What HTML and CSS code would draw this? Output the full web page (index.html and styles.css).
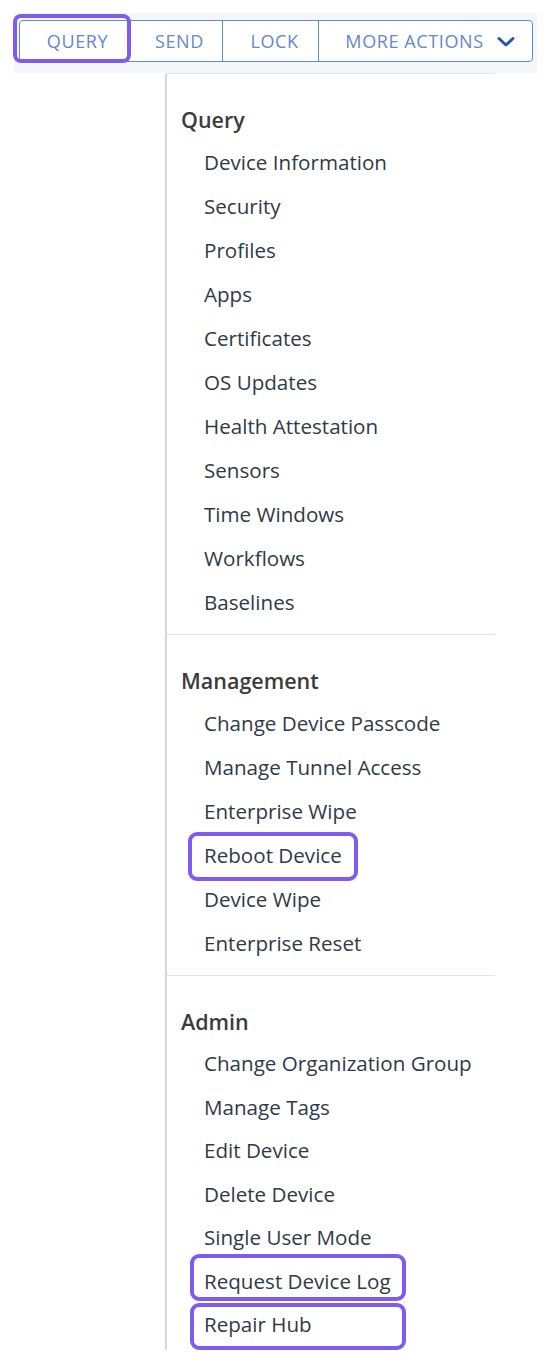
FILE: index.html
```html
<!DOCTYPE html>
<html lang="en">
<head>
<meta charset="utf-8">
<title>Device actions</title>
<link rel="stylesheet" href="styles.css">
</head>
<body>
<div class="page">
  <div class="toolbar">
    <div class="btn-group">
      <button class="btn btn-query is-marked">QUERY</button>
      <button class="btn btn-send">SEND</button>
      <button class="btn btn-lock">LOCK</button>
      <button class="btn btn-more">MORE ACTIONS
        <svg class="chev" width="18" height="12" viewBox="0 0 18 12" aria-hidden="true"><path d="M2 2.5 L9 9 L16 2.5" fill="none" stroke="#1f5aa6" stroke-width="3" stroke-linecap="round" stroke-linejoin="round"/></svg>
      </button>
    </div>
  </div>
  <div class="menu">
    <section class="group group-first">
      <h3 class="group-title">Query</h3>
      <ul class="items">
        <li>Device Information</li>
        <li>Security</li>
        <li>Profiles</li>
        <li>Apps</li>
        <li>Certificates</li>
        <li>OS Updates</li>
        <li>Health Attestation</li>
        <li>Sensors</li>
        <li>Time Windows</li>
        <li>Workflows</li>
        <li>Baselines</li>
      </ul>
    </section>
    <section class="group">
      <h3 class="group-title">Management</h3>
      <ul class="items">
        <li>Change Device Passcode</li>
        <li>Manage Tunnel Access</li>
        <li>Enterprise Wipe</li>
        <li class="mark mark-reboot">Reboot Device</li>
        <li>Device Wipe</li>
        <li>Enterprise Reset</li>
      </ul>
    </section>
    <section class="group group-last">
      <h3 class="group-title">Admin</h3>
      <ul class="items items-tight">
        <li>Change Organization Group</li>
        <li>Manage Tags</li>
        <li>Edit Device</li>
        <li>Delete Device</li>
        <li>Single User Mode</li>
        <li class="mark mark-log">Request Device Log</li>
        <li class="mark mark-hub">Repair Hub</li>
      </ul>
    </section>
  </div>
</div>
</body>
</html>
```

FILE: styles.css
```css
*, *::before, *::after { box-sizing: border-box; }

html, body {
  margin: 0;
  padding: 0;
  background: #ffffff;
}

body {
  font-family: "Open Sans", "Noto Sans", sans-serif;
  width: 550px;
  height: 1366px;
  overflow: hidden;
}

.page {
  padding-top: 13px;
}

.toolbar {
  margin-left: 14px;
  width: 523px;
  height: 60px;
  background: #f5f6f7;
  padding: 7px 4px 0 5px;
}

.btn-group {
  display: flex;
  height: 42px;
  width: 514px;
  border: 1px solid #5a8fd8;
  border-radius: 4px;
  background: #ffffff;
}

.btn {
  position: relative;
  font-family: "Open Sans", "Noto Sans", sans-serif;
  font-size: 18px;
  letter-spacing: 0.6px;
  color: #6488c8;
  background: transparent;
  border: 0;
  border-right: 1px solid #5a8fd8;
  padding: 0 0 0 8px;
  margin: 0;
  height: 100%;
  display: flex;
  align-items: center;
  justify-content: center;
}

.btn-query { width: 109px; padding-left: 7px; }
.btn-send { width: 94px; }
.btn-lock { width: 96px; }
.btn-more { flex: 1; border-right: 0; gap: 13px; padding-left: 9px; }

.chev { display: block; margin-top: 1px; }

.is-marked::after {
  content: "";
  position: absolute;
  left: -7px;
  top: -7px;
  right: -3px;
  bottom: -2px;
  border: 4px solid #7f5cf0;
  border-radius: 8px;
}

.menu {
  margin-left: 165px;
  width: 330px;
  height: 1277px;
  border-left: 2px solid #d8d8d8;
  border-top: 1px solid #e4e4e4;
  border-top-left-radius: 3px;
  box-shadow: -1px 0 2px rgba(0, 0, 0, 0.04);
  background: #ffffff;
}

.group {
  padding-top: 26px;
  padding-bottom: 10px;
  border-bottom: 1px solid #e3e3e3;
}

.group-last { border-bottom: 0; padding-bottom: 0; }

.group-title {
  margin: 0;
  padding-left: 14px;
  height: 40px;
  line-height: 40px;
  font-size: 21.5px;
  font-weight: 600;
  color: #3c3c3c;
}

.items {
  list-style: none;
  margin: 0;
  padding: 0;
}

.items li {
  position: relative;
  height: 44px;
  line-height: 44px;
  padding-left: 37px;
  font-size: 20.6px;
  color: #2e3a48;
  white-space: nowrap;
}

.items-tight li { height: 43.5px; line-height: 43.5px; }

.mark::after {
  content: "";
  position: absolute;
  border: 4px solid #7f5cf0;
  border-radius: 9px;
}

.mark-reboot::after { left: 21px; width: 170px; top: -1px; height: 49px; }
.mark-log::after { left: 23px; width: 216px; top: -5.5px; height: 47px; }
.mark-hub::after { left: 23px; width: 216px; top: 0; height: 47px; }
```
